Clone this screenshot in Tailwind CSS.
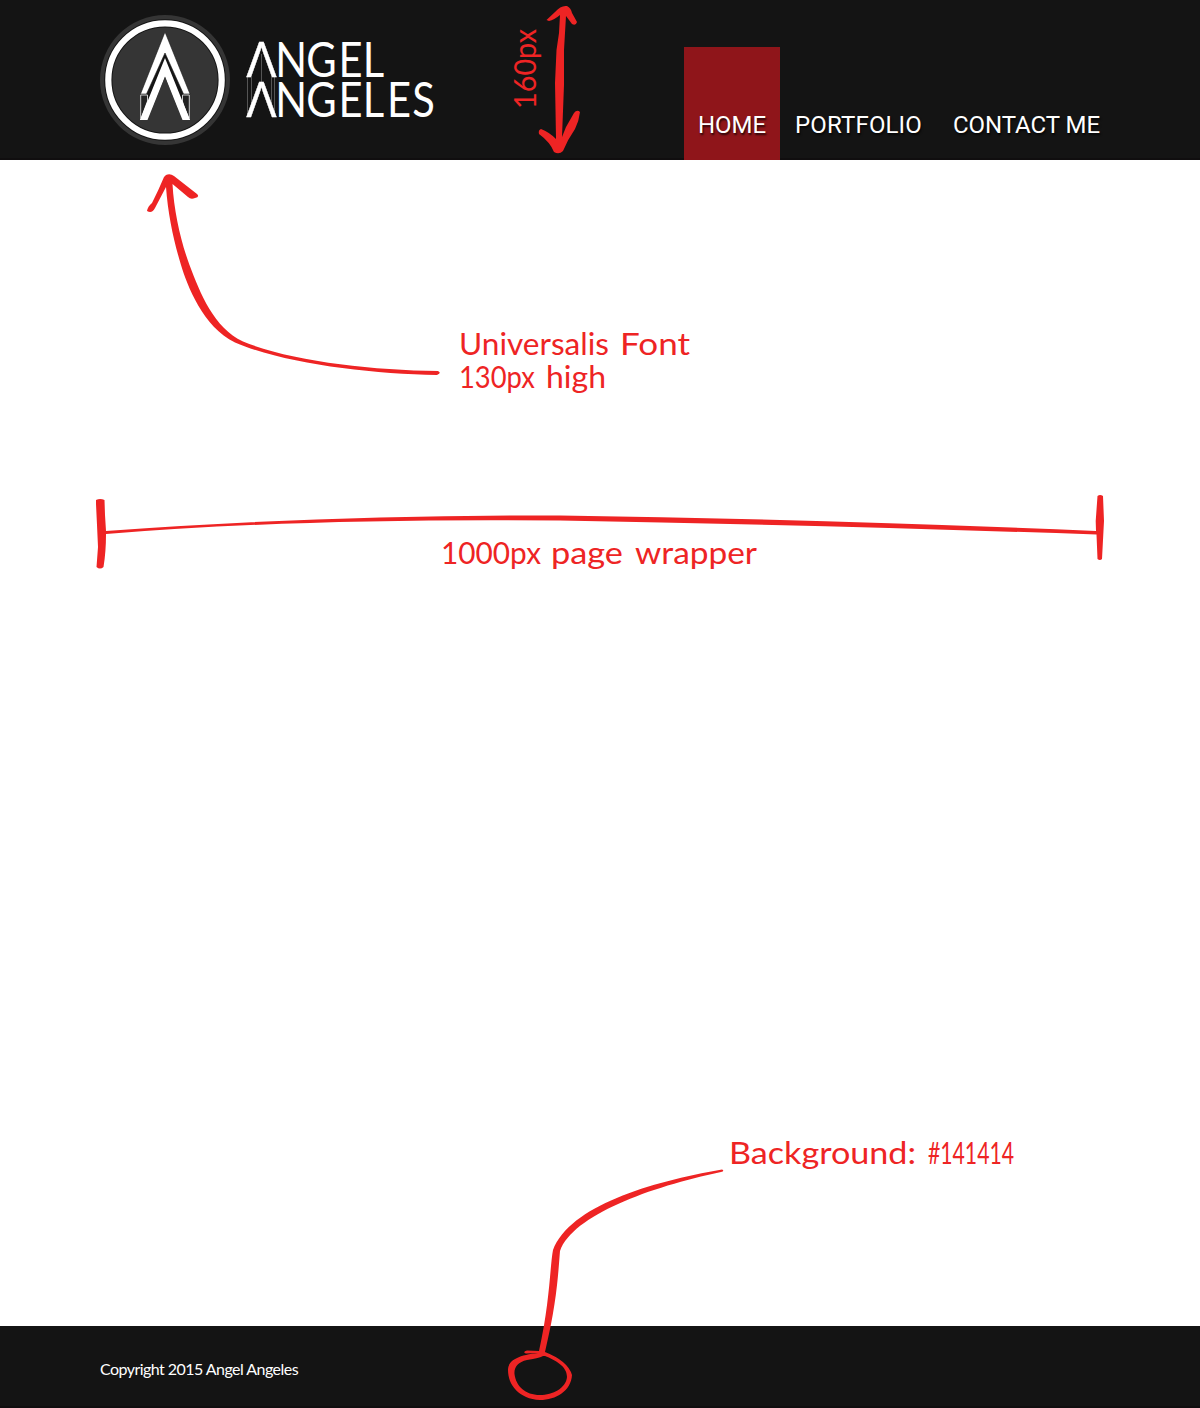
<!DOCTYPE html>
<html lang="en">
<head>
<meta charset="utf-8">
<title>Angel Angeles</title>
<script src="https://cdn.jsdelivr.net/npm/@tailwindcss/browser@4"></script>
</head>
<body class="bg-white">
<div class="relative flex h-[1408px] w-[1200px] flex-col overflow-hidden">
  <header class="h-40 border-b-2 border-[#100e0f] bg-[#141414]">
    <div class="mx-auto flex h-full w-[1000px] justify-between">
      <svg class="mt-[15px] h-[130px] w-[340px]" viewBox="100 15 340 130" fill="#fff" role="img" aria-label="Angel Angeles">
        <circle cx="165" cy="80" r="65" fill="#353535"/>
        <circle cx="165" cy="80" r="56.7" fill="none" stroke="#151515" stroke-width="8.2"/>
        <circle cx="165" cy="80" r="56.7" fill="none" stroke="#fff" stroke-width="6.2"/>
        <path d="M165 51 L187 93 V119 H183 L165 75 L147 119 H142 V93Z" fill="#151515"/>
        <path d="M165 74 L183 119 H147Z" fill="#353535"/>
        <path d="M165 32 L190 94 H183.500 L165 53 L146.500 94 H140.500Z" stroke="#181818" stroke-width=".6"/>
        <path d="M140.700 95H147.500V118H140.700ZM189.300 95H182.500V118H189.300Z" fill="#222" stroke="#ccc" stroke-width="1"/>
        <path d="M165 58 L190 120 H182 L165 77 L148 120 H140Z"/>
        <path d="M147.500 100V118.800L165 77L182.500 118.800V100L184 105L190 120H182L165 77L148 120H140Z"/>
        <path d="M165 76.500L182.500 120H147.500Z" fill="#353535"/>
        <g stroke="#555" stroke-width="1" fill="none"><path d="M247.500 77V116M251.500 77V105M261.500 54V82M271.500 77V105M274.500 77V116"/></g>
        <g font-family="Lato, sans-serif" font-size="49">
          <text y="77" stroke="#fff" stroke-width=".4"><tspan x="246.500" font-family="Open Sans" textLength="30" lengthAdjust="spacingAndGlyphs">Λ</tspan></text>
          <text transform="translate(275.300 77) scale(.85 1)" x="0 36.500 74.500 103">NGEL</text>
          <text y="117" stroke="#fff" stroke-width=".4"><tspan x="246.500" font-family="Open Sans" textLength="30" lengthAdjust="spacingAndGlyphs">Λ</tspan></text>
          <text transform="translate(275.300 117) scale(.85 1)" x="0 36.500 74.500 103 131.500 161">NGELES</text>
        </g>
      </svg>
      <nav class="mt-[47px] flex h-[113px] items-end font-['Roboto'] text-2xl leading-7 text-white [text-shadow:1px_2px_2px_#000b]">
        <a class="flex h-full w-24 items-end justify-center bg-[#8f151a] pb-[21px]">HOME</a>
        <a class="pb-[21px] pl-[15px] tracking-[0.15px]">PORTFOLIO</a>
        <a class="pb-[21px] pl-[31px] tracking-[-0.05px]">CONTACT ME</a>
      </nav>
    </div>
  </header>
  <main class="flex-1"></main>
  <footer class="h-[82px] border-b-2 border-[#100e0f] bg-[#141414]">
    <div class="mx-auto flex h-full w-[1000px] items-center pt-1.5 font-['Lato'] text-base tracking-[-0.54px] whitespace-nowrap text-white">Copyright 2015 Angel Angeles</div>
  </footer>

  <!-- Hand-drawn annotations -->
  <svg class="pointer-events-none absolute inset-0" width="1200" height="1408" viewBox="0 0 1200 1408" fill="#ee2424">
    <path d="M546.500 20 L555 12 Q561 5 567 6 Q571 8 572 13 L577 22 Q576 26 572 24 L566 16 L565 33 L564 50 L564 85 L562 137 L566 127 L574 113 Q577 109 580 112 Q579 121 575 129 Q568 139 563 151 Q559 155 554 152 Q550 142 539 134 Q538 130 541 129 Q549 132 556 139 L555.500 110 L555 83 L556.500 50 L559 33 L560 15 Q554 20 549 21Z"/>
    <path d="M166 175 Q170 173 174 176 L197 194 Q200 197 195 198 Q191 200 188 197 L172.500 184 C174 212 181 242 189.500 265 C200 293 214 328 243 341.500 C290 361 370 370 438 371 Q442 373 437 375 C370 374 285 364 235 342.500 C203 327 187 285 181 265 C174 242 168 215 166 187 L155 208 Q152 214 147 211 Q148 206 152 203 Q159 189 164 177Z"/>
    <path d="M96 500 Q100 498 104.500 500 L105 515 L106 531 Q320 515 560 515.500 Q820 519 1096 531 L1095.700 521 L1097.500 496 Q1100 494 1103 496 L1104 521 L1102 559 Q1100 561 1097.500 559 L1096.500 534.500 Q820 525 560 520.500 Q300 518 106 534 Q106 552 103.500 567 Q100 570 96.500 567 L98 547 L97 525 L96 504Z"/>
    <path d="M722 1169.500 Q725 1171 721 1172 C650 1187 573 1215 560 1251 C558 1275 557 1302 545 1352 Q568 1361 572 1375 C571 1391 556 1400 540 1400 C519 1399 508 1385 508 1370 C508 1359 521 1355 538 1353 L526 1353.500 Q522 1352 527 1350.500 L539 1351 C550 1302 550 1265 553 1250 C570 1206 650 1182 722 1169.500ZM543 1356 Q540 1358 527 1360 C518 1362 514 1367 514.500 1374 C516 1386 525 1395 540 1395 C553 1395 566 1388 567 1377 C567 1366 555 1360 545 1356Z" fill-rule="evenodd"/>
    <g font-family="Lato, sans-serif" font-size="31">
      <text transform="rotate(-90)" x="-109" y="536" textLength="80" lengthAdjust="spacingAndGlyphs">160px</text>
      <text y="355"><tspan x="459" textLength="150" lengthAdjust="spacingAndGlyphs">Universalis</tspan> <tspan x="620" textLength="70" lengthAdjust="spacingAndGlyphs">Font</tspan></text>
      <text y="388"><tspan x="459" textLength="76" lengthAdjust="spacingAndGlyphs">130px</tspan> <tspan x="546" textLength="60" lengthAdjust="spacingAndGlyphs">high</tspan></text>
      <text y="564"><tspan x="441" textLength="100" lengthAdjust="spacingAndGlyphs">1000px</tspan> <tspan x="551" textLength="72" lengthAdjust="spacingAndGlyphs">page</tspan> <tspan x="635" textLength="122" lengthAdjust="spacingAndGlyphs">wrapper</tspan></text>
      <text y="1164"><tspan x="729" textLength="187" lengthAdjust="spacingAndGlyphs">Background:</tspan> <tspan x="928" textLength="86" lengthAdjust="spacingAndGlyphs">#141414</tspan></text>
    </g>
  </svg>
</div>
</body>
</html>
